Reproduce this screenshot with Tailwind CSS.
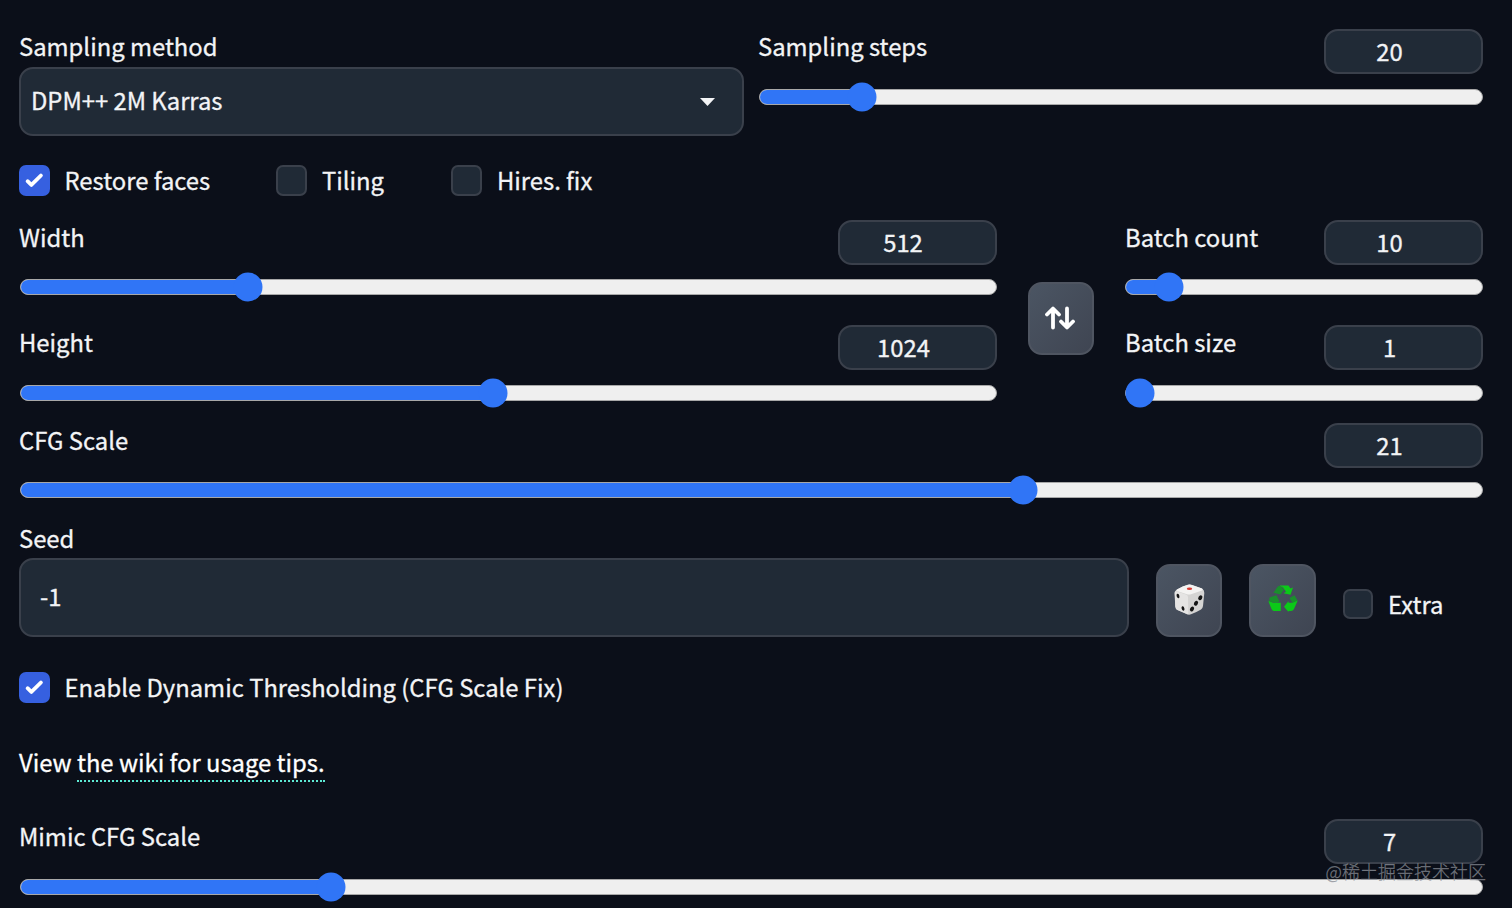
<!DOCTYPE html>
<html lang="en">

<head>
  <meta charset="UTF-8" />
  <meta name="viewport" content="width=device-width, initial-scale=1.0"/>
  <title>Stable Diffusion</title>
  <script src="https://cdn.jsdelivr.net/npm/@tailwindcss/browser@4"></script>
</head>

<body class="bg-[#0b0f19] text-[#f3f4f6] h-[908px] overflow-hidden relative font-['Noto_Sans_CJK_SC',sans-serif] text-[23.8px] leading-[34px] [-webkit-text-stroke:0.3px]">
  <main class="pl-[19px] pr-[29px] pt-[29px] flex flex-col">

    <!-- Sampler -->
    <div class="flex gap-[14px] h-[107px]">
      <div class="w-[725px]">
        <label class="block h-[38px]">Sampling method</label>
        <div class="h-[69px] rounded-[14px] border-2 border-[#3a404b] bg-[#202a36] pl-[10px] pr-[27px] flex items-center justify-between">
          <span class="pb-[3px]">DPM++ 2M Karras</span>
          <svg class="w-[15px] h-2" viewBox="0 0 15 8"><path d="M0 0h15L7.500 8z" fill="#f3f4f6"/></svg>
        </div>
      </div>
      <div class="flex-1">
        <div class="flex justify-between h-[60px]">
          <label>Sampling steps</label>
          <div class="w-[159px] h-[45px] rounded-[14px] border-2 border-[#3a404b] bg-[#202a36] pr-7 pb-0.5 flex items-center justify-center">20</div>
        </div>
        <div class="relative h-4 ml-px rounded-full bg-[#efefef] border-[1.500px] border-[#a8a8a8]">
          <div class="h-full rounded-l-full bg-[#3075f6]" style="width: 14.1%"></div>
          <div class="absolute top-1/2 -translate-1/2 size-[29px] rounded-full bg-[#3075f6]" style="left: 14.1%"></div>
        </div>
      </div>
    </div>

    <div class="flex items-center h-[31px] mt-[29px]">
      <label class="flex items-center w-[257px]">
        <span class="size-[30.5px] rounded-[7px] bg-[#3660e0] mr-[15px]"><svg viewBox="0 0 16 16" fill="white"><path d="M12.207 4.793a1 1 0 010 1.414l-5 5a1 1 0 01-1.414 0l-2-2a1 1 0 011.414-1.414L6.500 9.086l4.293-4.293a1 1 0 011.414 0z"/></svg></span>
        <span class="pb-0.5">Restore faces</span>
      </label>
      <label class="flex items-center w-[175px]">
        <span class="size-[31px] rounded-[7px] border-2 border-[#3a404b] bg-[#202a36] mr-[15px]"></span>
        <span class="pb-0.5">Tiling</span>
      </label>
      <label class="flex items-center">
        <span class="size-[31px] rounded-[7px] border-2 border-[#3a404b] bg-[#202a36] mr-[15px]"></span>
        <span class="pb-0.5">Hires. fix</span>
      </label>
    </div>

    <!-- Size and batch -->
    <div class="flex mt-6 h-[182px]">
      <div class="w-[978px]">
        <div class="flex justify-between h-[59px]">
          <label>Width</label>
          <div class="w-[159px] h-[45px] rounded-[14px] border-2 border-[#3a404b] bg-[#202a36] pr-[29px] pb-0.5 flex items-center justify-center">512</div>
        </div>
        <div class="relative h-4 ml-px rounded-full bg-[#efefef] border-[1.500px] border-[#a8a8a8]">
          <div class="h-full rounded-l-full bg-[#3075f6]" style="width: 23.3%"></div>
          <div class="absolute top-1/2 -translate-1/2 size-[29px] rounded-full bg-[#3075f6]" style="left: 23.3%"></div>
        </div>
        <div class="flex justify-between h-[60px] mt-[30px]">
          <label>Height</label>
          <div class="w-[159px] h-[45px] rounded-[14px] border-2 border-[#3a404b] bg-[#202a36] pr-7 pb-0.5 flex items-center justify-center">1024</div>
        </div>
        <div class="relative h-4 ml-px rounded-full bg-[#efefef] border-[1.500px] border-[#a8a8a8]">
          <div class="h-full rounded-l-full bg-[#3075f6]" style="width: 48.4%"></div>
          <div class="absolute top-1/2 -translate-1/2 size-[29px] rounded-full bg-[#3075f6]" style="left: 48.4%"></div>
        </div>
      </div>
      <button class="ml-[31px] mr-[31px] mt-[62px] w-[66px] h-[73px] rounded-[14px] border-2 border-[#4f5561] bg-linear-to-br from-[#4b5563] to-[#3f4552] pb-0.5 pr-0.5 flex items-center justify-center">
        <svg class="w-[30px] h-6" viewBox="0 0 30 24" fill="none" stroke="white" stroke-width="3.800" stroke-linecap="round" stroke-linejoin="round"><path d="M8 21.500V3M2 8.500l6-6 6 6M22 2.500V21M16 15.500l6 6 6-6"/></svg>
      </button>
      <div class="flex-1">
        <div class="flex justify-between h-[59px]">
          <label>Batch count</label>
          <div class="w-[159px] h-[45px] rounded-[14px] border-2 border-[#3a404b] bg-[#202a36] pr-7 pb-0.5 flex items-center justify-center">10</div>
        </div>
        <div class="relative h-4 rounded-full bg-[#efefef] border-[1.500px] border-[#a8a8a8]">
          <div class="h-full rounded-l-full bg-[#3075f6]" style="width: 12.1%"></div>
          <div class="absolute top-1/2 -translate-1/2 size-[29px] rounded-full bg-[#3075f6]" style="left: 12.1%"></div>
        </div>
        <div class="flex justify-between h-[60px] mt-[30px]">
          <label>Batch size</label>
          <div class="w-[159px] h-[45px] rounded-[14px] border-2 border-[#3a404b] bg-[#202a36] pr-7 pb-0.5 flex items-center justify-center">1</div>
        </div>
        <div class="relative h-4 rounded-full bg-[#efefef] border-[1.500px] border-[#a8a8a8]">
          <div class="absolute top-1/2 -translate-1/2 size-[29px] rounded-full bg-[#3075f6]" style="left: 3.8%"></div>
        </div>
      </div>
    </div>

    <!-- CFG scale -->
    <div class="mt-[21px]">
      <div class="flex justify-between h-[59px]">
        <label>CFG Scale</label>
        <div class="w-[159px] h-[45px] rounded-[14px] border-2 border-[#3a404b] bg-[#202a36] pr-7 pb-0.5 flex items-center justify-center">21</div>
      </div>
      <div class="relative h-4 ml-px rounded-full bg-[#efefef] border-[1.500px] border-[#a8a8a8]">
        <div class="h-full rounded-l-full bg-[#3075f6]" style="width: 68.6%"></div>
        <div class="absolute top-1/2 -translate-1/2 size-[29px] rounded-full bg-[#3075f6]" style="left: 68.6%"></div>
      </div>
    </div>

    <!-- Seed -->
    <div class="flex items-end h-[116px] mt-[23px]">
      <div class="w-[1110px]">
        <label class="block h-[37px]">Seed</label>
        <div class="h-[79px] rounded-[14px] border-2 border-[#3a404b] bg-[#202a36] pl-[19px] pb-1 flex items-center">-1</div>
      </div>
      <button class="ml-[27px] w-[66px] h-[73px] rounded-[14px] border-2 border-[#4f5561] bg-linear-to-br from-[#4b5563] to-[#3f4552] pb-0.5 flex items-center justify-center">
        <svg class="w-[31px] h-[31px]" viewBox="0 0 31 31">
          <path d="M3 5.500Q9 2 14 .8Q16 .3 18 .9L28 4.500Q30.500 6 30.300 9L29 22Q28.800 24 27 25.500Q22 28.500 17 30.300Q15 31 13 30.200L3.500 26Q1.500 25 1.300 22.500L.5 9Q.3 7 3 5.500z" fill="#d5d4d3"/>
          <path d="M3 5.500Q9 2 14 .8Q16 .3 18 .9L28 4.500Q29.500 5.500 28 6.500L17 10.300Q15 10.800 13 10.300L3 7Q1.500 6.300 3 5.500z" fill="#f4f3f2"/>
          <path d="M.8 8.500Q1.200 7 3 7.500L12 10.500Q14 11.300 14 13L14.300 30.500L3.500 26Q1.500 25 1.300 22.500z" fill="#e5e4e3"/>
          <ellipse cx="15.500" cy="4.700" rx="2.700" ry="1.200" fill="#d93a32"/>
          <g fill="#151515">
            <ellipse cx="4" cy="12" rx="1.400" ry="2.200" transform="rotate(-15 4 12)"/>
            <ellipse cx="9" cy="24.500" rx="1.400" ry="2.200" transform="rotate(-15 9 24.500)"/>
            <ellipse cx="26.300" cy="13.800" rx="1.900" ry="2.600" transform="rotate(30 26.300 13.800)"/>
            <ellipse cx="22" cy="19.300" rx="1.900" ry="2.600" transform="rotate(30 22 19.300)"/>
            <ellipse cx="18" cy="25" rx="1.900" ry="2.600" transform="rotate(30 18 25)"/>
          </g>
        </svg>
      </button>
      <button class="ml-[27px] w-[67px] h-[73px] rounded-[14px] border-2 border-[#4f5561] bg-linear-to-br from-[#4b5563] to-[#3f4552] pb-1 flex items-center justify-center">
        <svg class="w-[30px] h-[27px]" viewBox="0 0 30 28" preserveAspectRatio="none">
          <g fill="#1a8f2c">
            <path d="M9.800 1.500L12.500 .5L15.800 5L12.500 9.800L5.500 8z"/>
            <path d="M1.500 13L8.500 10.500L11.500 17L8.500 18.500L1 17z"/>
            <path d="M21.500 13.500L26.500 10.500L29.500 16L25 19.500z"/>
          </g>
          <g fill="#0bc918">
            <path d="M11.500 .5H20.500L22.500 3.700L25 2.500L22.500 10L15.500 8.500L18 7L15 2.500z"/>
            <path d="M.3 16.500L5 18.500H12.800V27H6Q4.500 27 3.500 25z"/>
            <path d="M29.700 16L26 25Q25 27 23 27H20.500V28L16 22.500L20.500 16.500V18.500H25z"/>
          </g>
        </svg>
      </button>
      <label class="ml-[27px] mb-[15px] h-9 flex items-center">
        <span class="size-[30px] rounded-[7px] border-2 border-[#3a404b] bg-[#202a36] mr-[15px]"></span>
        <span class="pb-px">Extra</span>
      </label>
    </div>

    <!-- Dynamic thresholding -->
    <label class="flex items-center h-[31px] mt-[35px]">
      <span class="size-[30.5px] rounded-[7px] bg-[#3660e0] mr-[15px]"><svg viewBox="0 0 16 16" fill="white"><path d="M12.207 4.793a1 1 0 010 1.414l-5 5a1 1 0 01-1.414 0l-2-2a1 1 0 011.414-1.414L6.500 9.086l4.293-4.293a1 1 0 011.414 0z"/></svg></span>
      <span class="pb-0.5">Enable Dynamic Thresholding (CFG Scale Fix)</span>
    </label>
    <p class="mt-[42px] h-9 flex whitespace-pre text-white">View <a href="#" class="h-[37px] border-b-2 border-dotted border-[#5eead4]">the wiki for usage tips.</a></p>
    <div class="mt-[38px]">
      <div class="flex justify-between h-[60px]">
        <label>Mimic CFG Scale</label>
        <div class="w-[159px] h-[45px] rounded-[14px] border-2 border-[#3a404b] bg-[#202a36] pr-7 pb-0.5 flex items-center justify-center">7</div>
      </div>
      <div class="relative h-4 ml-px rounded-full bg-[#efefef] border-[1.500px] border-[#a8a8a8]">
        <div class="h-full rounded-l-full bg-[#3075f6]" style="width: 21.2%"></div>
        <div class="absolute top-1/2 -translate-1/2 size-[29px] rounded-full bg-[#3075f6]" style="left: 21.2%"></div>
      </div>
    </div>
  </main>

  <div class="absolute right-[26px] bottom-[23px] text-[18px] leading-7 text-[#8b8f98]/70 font-light">@稀土掘金技术社区</div>
</body>

</html>
